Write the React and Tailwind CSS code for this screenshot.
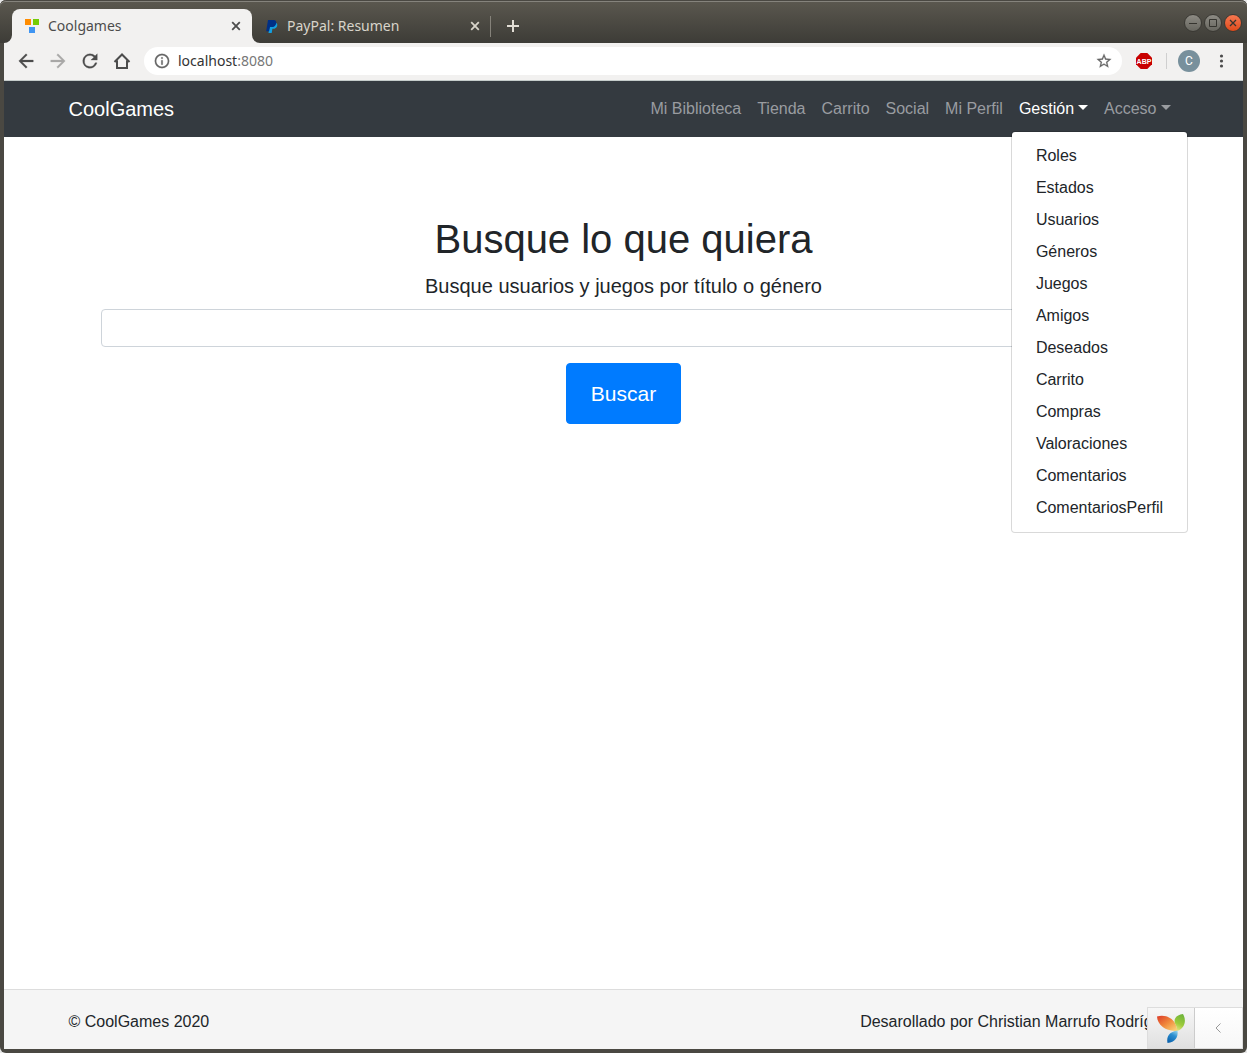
import { useState } from "react";

const menu = [
  "Roles", "Estados", "Usuarios", "Géneros", "Juegos", "Amigos",
  "Deseados", "Carrito", "Compras", "Valoraciones", "Comentarios", "ComentariosPerfil",
];
const links = ["Mi Biblioteca", "Tienda", "Carrito", "Social", "Mi Perfil"];

function Material({ d, className = "" }) {
  return (
    <svg viewBox="1 1 22 22" fill="currentColor" stroke="currentColor" strokeWidth="0.3" aria-hidden="true" className={`shrink-0 ${className}`}>
      <path d={d} />
    </svg>
  );
}

const paths = {
  back: "M20 11H7.83l5.59-5.59L12 4l-8 8 8 8 1.41-1.41L7.83 13H20v-2z",
  forward: "M12 4l-1.41 1.41L16.17 11H4v2h12.17l-5.58 5.59L12 20l8-8z",
  reload: "M17.65 6.35A7.96 7.96 0 0 0 12 4a8 8 0 1 0 7.73 10h-2.08A6 6 0 1 1 12 6c1.66 0 3.14.69 4.22 1.78L13 11h7V4l-2.35 2.35z",
  info: "M11 17h2v-6h-2v6zm1-15a10 10 0 1 0 0 20 10 10 0 0 0 0-20zm0 18a8 8 0 1 1 0-16 8 8 0 0 1 0 16zM11 9h2V7h-2v2z",
  star: "M22 9.24l-7.19-.62L12 2 9.19 8.63 2 9.24l5.46 4.73L5.82 21 12 17.27 18.18 21l-1.63-7.03L22 9.24zM12 15.4l-3.76 2.27 1-4.28-3.32-2.88 4.38-.38L12 6.1l1.71 4.04 4.38.38-3.32 2.88 1 4.28L12 15.4z",
};

function Cross() {
  return (
    <svg viewBox="0 0 10 10" fill="none" stroke="currentColor" strokeWidth="1.8" aria-hidden="true" className="size-[10px]">
      <path d="M1.200 1.200l7.600 7.600M8.800 1.200l-7.600 7.600" />
    </svg>
  );
}

function TitleBar() {
  return (
    <header className="-mx-1 flex h-[43px] shrink-0 items-end rounded-t-md border-t border-[#4a4842] bg-linear-to-b from-[#5b584f] to-[#3d3c37] pl-3 font-['Noto_Sans',sans-serif] text-[14px] shadow-[inset_0_1px_0_#85837c]">
      <div className="relative flex h-[34px] w-[240px] items-center rounded-t-lg bg-[#f2f1f0] pr-[11px] pl-3 text-[#4c4c4c]">
        <svg viewBox="0 0 8 8" aria-hidden="true" className="absolute bottom-0 -left-2 size-2"><path d="M8 0v8H0a8 8 0 0 0 8-8z" fill="#f2f1f0" /></svg>
        <svg viewBox="0 0 8 8" aria-hidden="true" className="absolute -right-2 bottom-0 size-2"><path d="M0 0v8h8a8 8 0 0 1-8-8z" fill="#f2f1f0" /></svg>
        <svg viewBox="0 0 16 16" aria-hidden="true" className="mr-2 size-4">
          <path fill="#ff8c00" d="M1 1h6v6H1z" />
          <path fill="#74cc06" d="M9 1h6v6H9z" />
          <path fill="#3f95f2" d="M5 9h6v6H5z" />
        </svg>
        <span className="grow pb-0.5">Coolgames</span>
        <button aria-label="Cerrar Coolgames"><Cross /></button>
      </div>
      <div className="flex h-[34px] w-[238px] items-center pr-[10px] pl-3 text-[#d8d4ca]">
        <svg viewBox="0 0 16 16" aria-hidden="true" className="mr-[7px] size-4">
          <path fill="#12a0e0" d="M6 5h6.500c1.300 1.300.9 3.500-.4 4.700-1 .9-2.200 1.100-3.700 1.100L7.700 15H4.500z" />
          <path fill="#002f86" d="M4 2h5.500c2.300 0 3.200 1.400 2.700 3.400C11.700 7.900 10 9 7.600 9H6l-.9 4.300H2.200z" />
        </svg>
        <span className="grow pb-0.5">PayPal: Resumen</span>
        <button aria-label="Cerrar PayPal"><Cross /></button>
      </div>
      <div className="mb-[6px] h-[21px] w-px bg-[#85827a]" />
      <button aria-label="Nueva pestaña" className="mb-[11px] ml-4 text-[#e2ded5]">
        <svg viewBox="0 0 12 12" fill="none" stroke="currentColor" strokeWidth="2" className="size-3"><path d="M6 0v12M0 6h12" /></svg>
      </button>
      <div className="mb-[11px] ml-auto flex gap-[2px] pr-[5px] text-[#35342f]">
        <button aria-label="Minimizar" className="grid size-[18px] place-items-center rounded-full border border-[#3a3934] bg-linear-to-b from-[#8d8b84] to-[#67665f]">
          <svg viewBox="0 0 8 8" className="size-2"><path d="M0 4.500h8" stroke="currentColor" /></svg>
        </button>
        <button aria-label="Maximizar" className="grid size-[18px] place-items-center rounded-full border border-[#3a3934] bg-linear-to-b from-[#8d8b84] to-[#67665f]">
          <svg viewBox="0 0 8 8" className="size-2"><path d="M.5.500h7v7h-7z" stroke="currentColor" fill="none" /></svg>
        </button>
        <button aria-label="Cerrar ventana" className="grid size-[18px] place-items-center rounded-full border border-[#3a3934] bg-linear-to-b from-[#f6774f] to-[#df4a18]">
          <svg viewBox="0 0 8 8" className="size-2"><path d="M1 1l6 6M7 1L1 7" stroke="currentColor" strokeWidth="1.300" /></svg>
        </button>
      </div>
    </header>
  );
}

function Toolbar() {
  const [url, setUrl] = useState(":8080");
  return (
    <div className="flex h-[38px] shrink-0 items-center border-b border-[#c5cccb] bg-[#f2f1f0] pr-[14px] pb-0.5 pl-3 text-[#4c4c4c]">
      <button aria-label="Atrás"><Material d={paths.back} className="size-5" /></button>
      <button aria-label="Adelante" className="ml-3 text-[#a9a8a7]"><Material d={paths.forward} className="size-5" /></button>
      <button aria-label="Recargar" className="ml-3"><Material d={paths.reload} className="size-5" /></button>
      <button aria-label="Inicio" className="ml-3">
        <svg viewBox="0 0 20 20" fill="none" stroke="currentColor" strokeWidth="2" className="size-5"><path d="M2.500 11L10 3.500l7.500 7.500M5 9.500V17h10V9.500" /></svg>
      </button>
      <div className="ml-3 flex h-7 grow items-center rounded-full bg-white pr-[10px] pl-[10px] font-['Noto_Sans',sans-serif] text-[14px]">
        <Material d={paths.info} className="size-4 text-[#666]" />
        <label htmlFor="url" className="ml-2 text-[#333]">localhost</label>
        <input id="url" value={url} onChange={(e) => setUrl(e.target.value)} className="min-w-0 grow text-[#777] outline-none" />
        <button aria-label="Añadir a marcadores" className="text-[#666]"><Material d={paths.star} className="size-4" /></button>
      </div>
      <button aria-label="Adblock Plus" className="ml-[14px]">
        <svg viewBox="0 0 16 16" className="size-4">
          <path d="M4.700 0h6.600L16 4.700v6.600L11.300 16H4.700L0 11.300V4.700z" fill="#c80000" />
          <text x="8" y="10.500" textAnchor="middle" fill="#fff" fontSize="7" fontWeight="700" fontFamily="Liberation Sans">ABP</text>
        </svg>
      </button>
      <div className="ml-[14px] h-4 w-px bg-[#cfcfcf]" />
      <button aria-label="Perfil" className="ml-[11px] size-[22px] rounded-full bg-[#78909c] font-['Roboto',sans-serif] text-[12px] leading-[22px] text-white">C</button>
      <button aria-label="Menú" className="ml-[13px]">
        <svg viewBox="0 0 16 16" fill="currentColor" className="size-4"><circle cx="8.500" cy="3" r="1.600" /><circle cx="8.500" cy="8" r="1.600" /><circle cx="8.500" cy="13" r="1.600" /></svg>
      </button>
    </div>
  );
}

function Caret() {
  return <span className="ml-1 inline-block border-x-[5px] border-t-[5px] border-x-transparent border-t-current align-[4px]" />;
}

function NavBar() {
  return (
    <nav className="h-14 shrink-0 bg-[#343a40]">
      <div className="mx-auto flex h-full max-w-[1140px] items-center justify-between px-[15px]">
        <a href="#" className="text-[20px] leading-[30px] text-white">CoolGames</a>
        <ul className="flex text-[#999ca0]">
          {links.map((l) => (
            <li key={l}><a href="#" className="block p-2">{l}</a></li>
          ))}
          <li className="relative">
            <button className="block p-2 text-white" aria-expanded="true">Gestión<Caret /></button>
            <ul className="absolute top-full left-0 z-10 mt-[2px] rounded border border-black/15 bg-white bg-clip-padding py-2 text-[#212529]">
              {menu.map((m) => (
                <li key={m}><a href="#" className="block px-6 py-1 whitespace-nowrap">{m}</a></li>
              ))}
            </ul>
          </li>
          <li><button className="block p-2">Acceso<Caret /></button></li>
        </ul>
      </div>
    </nav>
  );
}

function YiiLogo() {
  return (
    <svg viewBox="0 0 30 30" aria-hidden="true" className="size-[30px]">
      <defs>
        <linearGradient id="leafRed" x1="0" y1="0" x2="1" y2="1">
          <stop offset="0" stopColor="#dc3a28" /><stop offset=".5" stopColor="#f08a3c" /><stop offset="1" stopColor="#fbdc80" />
        </linearGradient>
        <linearGradient id="leafGreen" x1=".7" y1="0" x2=".4" y2="1">
          <stop offset="0" stopColor="#6db33a" /><stop offset=".6" stopColor="#9ccb3b" /><stop offset="1" stopColor="#e3e27a" />
        </linearGradient>
        <linearGradient id="leafBlue" x1=".8" y1="0" x2=".3" y2="1">
          <stop offset="0" stopColor="#8fd0ea" /><stop offset=".4" stopColor="#2c8fd0" /><stop offset="1" stopColor="#0b63ad" />
        </linearGradient>
      </defs>
      <path fill="url(#leafRed)" d="M1 3.500C7 1.800 13.500 3.200 17.500 8c2.800 3.500 3.700 7 3.700 10-5.200 0-11-1-15-4.500C3.200 11 1.200 7.500 1 3.500z" />
      <path fill="url(#leafGreen)" d="M27 1c3.500 6 2.500 13.500-5.800 17-.1-3-.8-5.500-2.300-7.800C17.500 5.500 20.500 2 27 1z" />
      <path fill="url(#leafBlue)" d="M21.500 17.500c1 6.500-2.500 12-10 12.500-1.500-7 2.500-11.500 10-12.500z" />
    </svg>
  );
}

export default function App() {
  return (
    <div className="min-h-screen bg-[#e8e8e8] font-['Liberation_Sans',Arial,sans-serif] text-base text-[#212529]">
      <div className="flex min-h-screen flex-col rounded-md border-x-4 border-b-4 border-[#4a4842] bg-white">
        <TitleBar />
        <Toolbar />
        <NavBar />
        <main className="mx-auto w-full max-w-[1140px] grow px-[15px] pt-[78px]">
          <form className="px-8 text-center" onSubmit={(e) => e.preventDefault()}>
            <h1 className="mb-2 text-[40px] leading-[48px]">Busque lo que quiera</h1>
            <label htmlFor="search" className="mb-2 block text-[20px] leading-[30px]">Busque usuarios y juegos por título o género</label>
            <input id="search" className="mb-4 block h-[38px] w-full rounded border border-[#ced4da] bg-white px-3" />
            <button className="rounded border border-[#007bff] bg-[#007bff] px-6 py-[14px] text-[21px] leading-[31px] text-white">Buscar</button>
          </form>
        </main>
        <footer className="relative shrink-0 border-t border-[#ddd] bg-[#f5f5f5]">
          <div className="mx-auto flex max-w-[1140px] justify-between px-[15px] pt-5 pb-[15px]">
            <p>© CoolGames 2020</p>
            <p>Desarollado por Christian Marrufo Rodríguez</p>
          </div>
          <div className="absolute right-0 bottom-0 flex h-[42px] w-24 border border-[#ddd]">
            <a href="#" aria-label="Yii" className="flex w-[47px] items-center justify-center border-r border-[#ccc] bg-linear-to-b from-[#f7f7f7] to-[#e0e0e0]"><YiiLogo /></a>
            <button aria-label="Mostrar barra de depuración" className="flex grow items-center justify-center bg-linear-to-b from-white to-[#f7f7f7] pr-0.5 text-[#999]">
              <svg viewBox="0 0 6 10" fill="none" stroke="currentColor" className="h-[10px] w-[6px]"><path d="M5.500.500L1 5l4.500 4.500" /></svg>
            </button>
          </div>
        </footer>
      </div>
    </div>
  );
}
